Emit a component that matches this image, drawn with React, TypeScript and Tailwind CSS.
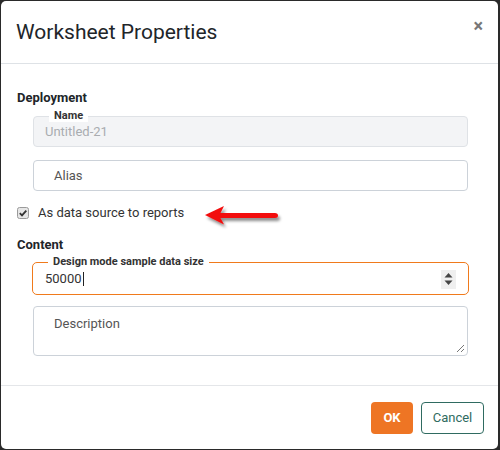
import React from "react";

const Legend = ({ text }: { text: string }) => (
  <span className="absolute left-[15px] top-[-7px] bg-white px-[5px] text-[11px] leading-[12px] font-bold text-[#333]">
    {text}
  </span>
);

const Arrow = () => (
  <svg width="90" height="28" viewBox="0 0 90 28" className="ml-[17px] mt-[6px]">
    <defs>
      <filter id="shadow" x="-20%" y="-50%" width="140%" height="200%">
        <feDropShadow dx="2" dy="3" stdDeviation="1.6" floodColor="#000" floodOpacity="0.45" />
      </filter>
    </defs>
    <path
      d="M4 13 L23 4 L19.5 11 L74 11 Q77 11 77 13.5 Q77 16 74 16 L19.5 16 L23 22.5 Z"
      fill="#f20f0f"
      filter="url(#shadow)"
    />
  </svg>
);

export default function App() {
  return (
    <div className="w-[500px] h-[450px] bg-[#2a2a2a] pt-px pl-px font-['Roboto',sans-serif]">
      <div className="w-[497px] h-[448px] bg-white rounded-[5px] flex flex-col">
        {/* header */}
        <div className="h-[63px] border-b border-[#dee2e6] flex justify-between pl-[15px] pr-[15px]">
          <h1 className="mt-[16px] text-[21px] leading-[30px] text-[#212529]">
            Worksheet Properties
          </h1>
          <button className="mt-[17px] h-[16px] text-[#777] text-[18px] leading-[16px] font-bold">
            ×
          </button>
        </div>

        {/* body */}
        <div className="flex-1 px-[16px] pt-[26px]">
          <h2 className="text-[13px] leading-[16px] font-bold text-[#212529]">Deployment</h2>

          <div className="relative ml-[16px] mt-[10px] w-[435px] h-[31px] rounded-[4px] border border-[#dfe2e6] bg-[#f3f4f6] pl-[11px] flex items-center">
            <Legend text="Name" />
            <span className="text-[13px] text-[#a9acb0]">Untitled-21</span>
          </div>

          <div className="ml-[16px] mt-[13px] w-[435px] h-[31px] rounded-[4px] border border-[#ccd2d9] pl-[20px] flex items-center">
            <span className="text-[13px] text-[#555]">Alias</span>
          </div>

          <div className="mt-[12px] h-[20px] flex items-center">
            <svg width="12" height="12" viewBox="0 0 12 12">
              <rect x="0.5" y="0.5" width="11" height="11" rx="2" fill="#e6e6e6" stroke="#9a9a9a" />
              <path d="M2.8 6.2 L5 8.4 L9.3 3.6" fill="none" stroke="#333" strokeWidth="1.8" />
            </svg>
            <span className="ml-[9px] text-[13px] text-[#333]">As data source to reports</span>
            <Arrow />
          </div>

          <h2 className="mt-[14px] text-[13px] leading-[16px] font-bold text-[#212529]">Content</h2>

          <div className="relative ml-[15px] mt-[9px] w-[437px] h-[33px] rounded-[5px] border border-[#f07a1c] pl-[12px] pr-[12px] flex items-center justify-between">
            <Legend text="Design mode sample data size" />
            <span className="mt-[1px] text-[13px] text-[#333] flex items-center">
              50000
              <span className="ml-px w-px h-[14px] bg-[#222]" />
            </span>
            <div className="w-[15px] h-[19px] bg-[#efefef] flex items-center justify-center mt-[1px]">
              <svg width="9" height="14" viewBox="0 0 9 14">
                <path d="M0.5 5.5 L4.5 1 L8.5 5.5 Z" fill="#444" />
                <path d="M0.5 8.5 L4.5 13 L8.5 8.5 Z" fill="#444" />
              </svg>
            </div>
          </div>

          <div className="relative ml-[16px] mt-[11px] w-[435px] h-[50px] rounded-[4px] border border-[#ccd2d9] pl-[20px] pt-[4px]">
            <span className="text-[13px] text-[#555]">Description</span>
            <svg width="10" height="10" viewBox="0 0 10 10" className="absolute right-[2px] bottom-[2px]">
              <path d="M9 2 L2 9 M9 6 L6 9" stroke="#777" strokeWidth="1" />
            </svg>
          </div>
        </div>

        {/* footer */}
        <div className="h-[64px] border-t border-[#e4e6e9] flex items-center justify-end gap-[8px] pr-[14px]">
          <button className="w-[42px] h-[32px] rounded-[4px] bg-[#ee7524] text-white text-[13px] font-bold">
            OK
          </button>
          <button className="w-[63px] h-[32px] rounded-[4px] border border-[#2f6b61] text-[#2f6b61] text-[13px]">
            Cancel
          </button>
        </div>
      </div>
    </div>
  );
}
